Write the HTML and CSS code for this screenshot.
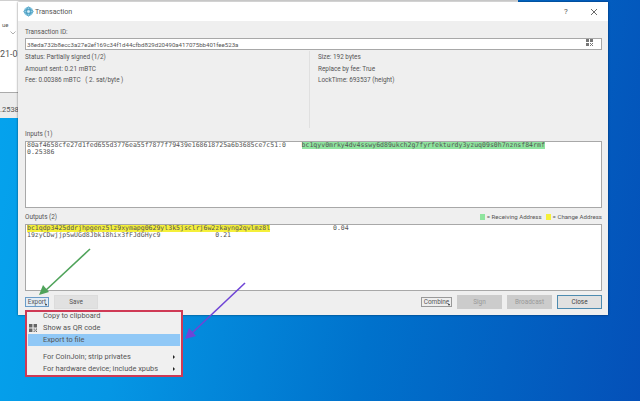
FILE: index.html
```html
<!DOCTYPE html>
<html>

<head>
    <title>Transaction</title>
    <link rel="stylesheet" href="styles.css">
</head>

<body>
    <!-- window left behind the dialog -->
    <div class="back-window">
        <div class="back-top">
            <span class="back-tab">ue</span>
            <svg class="back-chevron" viewBox="0 0 6 4">
                <path d="M0.5 0.5L3 3L5.5 0.5" fill="none" stroke="#777" stroke-width="0.6"></path>
            </svg>
            <span class="back-date">21-07</span>
        </div>
        <div class="back-bottom">.25386</div>
    </div>

    <div class="dialog">
        <div class="titlebar">
            <svg class="app-icon" viewBox="0 0 12 12">
                <circle cx="6" cy="6" r="5.2" fill="#8fcbe4"></circle>
                <ellipse cx="6" cy="6" rx="5" ry="2" fill="none" stroke="#2a86ad" stroke-width="0.7"></ellipse>
                <ellipse cx="6" cy="6" rx="2" ry="5" fill="none" stroke="#2a86ad" stroke-width="0.7"></ellipse>
                <circle cx="6" cy="6" r="1.4" fill="#d8eef7"></circle>
            </svg>
            <span class="title">Transaction</span>
            <span class="help">?</span>
            <svg class="close-x" viewBox="0 0 8 8">
                <path d="M1 1L7 7M7 1L1 7" stroke="#444" stroke-width="0.8"></path>
            </svg>
        </div>

        <div class="body">
            <div class="label">Transaction ID:</div>
            <div class="txid">
                <span>38eda732b8ecc3a27e2ef169c34f1d44cfbd829d20490a417075bb401fee523a</span>
                <svg class="qr qr-field" viewBox="0 0 7 7">
                    <path d="M0 0h3v3h-3zM4 0h3v3h-3zM0 4h3v3h-3zM4 4h1v1h-1zM6 4h1v1h-1zM5 5h1v1h-1zM4 6h1v1h-1zM6 6h1v1h-1z" fill="#777"></path>
                </svg>
            </div>

            <div class="info">
                <div class="info-col">
                    <div>Status: Partially signed (1/2)</div>
                    <div>Amount sent: 0.21 mBTC</div>
                    <div>Fee: 0.00386 mBTC &nbsp;&nbsp;( 2. sat/byte )</div>
                </div>
                <div class="info-col info-right">
                    <div>Size: 192 bytes</div>
                    <div>Replace by fee: True</div>
                    <div>LockTime: 693537 (height)</div>
                </div>
            </div>

            <div class="label">Inputs (1)</div>
            <div class="textbox"><span>80af4658cfe27d1fed655d3776ea55f7877f79439e168618725a6b3685ce7c51:0    <span class="green">bc1qyv0mrky4dv4sswy6d89ukch2g7fyrfekturdy3yzuq09s0h7nznsf84rmf</span>
0.25386</span></div>

            <div class="label legend-row">
                <span>Outputs (2)</span>
                <span class="legend">
                    <i class="swatch swatch-green"></i> = Receiving Address
                    <i class="swatch swatch-yellow"></i> = Change Address
                </span>
            </div>
            <div class="textbox"><span><span class="yellow">bc1qdp3425ddrjhpgenz5lz9xymapg0629yl3k5jsclrj6w2zkayng2qvlmz8l</span>                0.04
19zyCDwjjpSwUGd8Jbk18hix3fFJdGHyc9              0.21</span></div>

            <div class="buttons">
                <button class="btn btn-small btn-focus">Export<i class="caret"></i></button>
                <button class="btn btn-save">Save</button>
                <span class="spacer"></span>
                <button class="btn btn-small btn-combine">Combine<i class="caret"></i></button>
                <button class="btn btn-off">Sign</button>
                <button class="btn btn-off">Broadcast</button>
                <button class="btn btn-close">Close</button>
            </div>
        </div>
    </div>

    <div class="menu">
        <div class="menu-item">Copy to clipboard</div>
        <div class="menu-item">
            <svg class="qr qr-menu" viewBox="0 0 7 7">
                <path d="M0 0h3v3h-3zM4 0h3v3h-3zM0 4h3v3h-3zM4 4h1v1h-1zM6 4h1v1h-1zM5 5h1v1h-1zM4 6h1v1h-1zM6 6h1v1h-1z" fill="#666"></path>
            </svg>
            Show as QR code
        </div>
        <div class="menu-item menu-active">Export to file</div>
        <div class="menu-sep"></div>
        <div class="menu-item">For CoinJoin; strip privates<i class="arrow"></i></div>
        <div class="menu-item">For hardware device; include xpubs<i class="arrow"></i></div>
    </div>

    <!-- annotation arrows drawn over the screenshot -->
    <svg class="arrows" viewBox="0 0 640 401">
        <path d="M90 249L45 291" stroke="#4fa35a" stroke-width="1.6" fill="none"></path>
        <path d="M39 295L49 292L43 285Z" fill="#4fa35a"></path>
        <path d="M245 283L191 334" stroke="#6f45d6" stroke-width="1.6" fill="none"></path>
        <path d="M185 339L196 336L189 328Z" fill="#6f45d6"></path>
    </svg>
</body>

</html>
```

FILE: styles.css
```css
html,
body {
    margin: 0;
    height: 100%;
}

body {
    position: relative;
    overflow: hidden;
    font-family: Roboto, Arial, sans-serif;
    font-size: 6.4px;
    color: #555;
    background: linear-gradient(100deg, #05a4ee 0%, #0596e4 25%, #0072cc 60%, #0450b8 100%);
}

.back-window {
    position: absolute;
    left: 0;
    top: 0;
    width: 518px;
    height: 118px;
    background-color: #fff;
    border-top: 1px solid #d0d0d0;
    box-sizing: border-box;
}

.back-top {
    height: 92px;
    border-bottom: 1px solid #aaa;
    box-sizing: border-box;
    color: #555;
}

.back-tab {
    display: block;
    padding: 20px 0 0 2px;
    font-size: 6px;
}

.back-chevron {
    display: block;
    width: 6px;
    height: 4px;
    margin: 3px 0 0 10px;
}

.back-date {
    display: block;
    padding-top: 14px;
    font-size: 9px;
}

.back-bottom {
    height: 25px;
    line-height: 34px;
    background-color: #ececec;
    font-size: 7.5px;
}

.dialog {
    position: absolute;
    left: 18px;
    top: 2px;
    width: 590px;
    height: 313px;
    background-color: #efefef;
    box-shadow: 0 0 2px rgba(0, 0, 0, 0.55);
}

.titlebar {
    display: flex;
    align-items: center;
    height: 19px;
    padding-left: 5px;
    background-color: #fff;
}

.app-icon {
    width: 11px;
    height: 11px;
}

.title {
    flex: 1;
    margin-left: 1px;
    font-size: 7.1px;
}

.help {
    width: 26px;
    font-size: 8px;
}

.close-x {
    width: 8px;
    height: 8px;
    margin-right: 10px;
}

.body {
    padding: 5px 6px 0 7px;
}

.label {
    height: 12px;
    line-height: 12px;
}

.txid {
    display: flex;
    justify-content: space-between;
    align-items: flex-start;
    height: 12px;
    line-height: 11px;
    padding: 0 8px 0 1px;
    background-color: #fff;
    border: 1px solid #a8a8a8;
    box-sizing: border-box;
    font-size: 6.1px;
}

.qr {
    display: block;
}

.qr-field {
    width: 7px;
    height: 7px;
}

.info {
    display: flex;
    height: 77px;
    margin-top: 1px;
    line-height: 11.5px;
}

.info-col {
    width: 288px;
    padding-top: 1px;
}

.info-right {
    padding-left: 8px;
    border-left: 1px solid #e0e0e0;
}

.textbox {
    height: 67px;
    padding: 0 1px;
    margin-top: 1px;
    background-color: #fff;
    border: 1px solid #a8a8a8;
    box-sizing: border-box;
    font-family: "DejaVu Sans Mono", monospace;
    font-size: 6.53px;
    line-height: 7px;
    white-space: pre;
}

.legend-row {
    display: flex;
    justify-content: space-between;
    margin-top: 3px;
}

.legend {
    display: flex;
    align-items: center;
    gap: 2px;
    font-size: 6.1px;
}

.swatch {
    width: 5px;
    height: 6px;
}

.swatch-green {
    background-color: #8fe59f;
}

.swatch-yellow {
    background-color: #f5f03a;
    margin-left: 2px;
}

.green,
.yellow {
    display: inline-block;
    height: 7px;
    line-height: 7px;
    vertical-align: top;
}

.green {
    background-color: #8fe59f;
}

.yellow {
    background-color: #f5f03a;
}

.buttons {
    display: flex;
    align-items: center;
    gap: 5px;
    height: 14px;
    margin-top: 4px;
}

.spacer {
    flex: 1;
}

.btn {
    position: relative;
    height: 14px;
    width: 45px;
    padding: 0;
    border: 1px solid #dcdcdc;
    background-color: #e1e1e1;
    box-sizing: border-box;
    font-family: inherit;
    font-size: 6.4px;
    color: #555;
}

.btn-small {
    height: 10px;
    width: 24px;
    line-height: 8px;
}

.btn-focus {
    border-color: #6a9cc8;
    background-color: #e2ecf5;
}

.btn-save {
    width: 44px;
}

.btn-combine {
    width: 31px;
    border-color: #999;
    background-color: #eee;
}

.btn-off {
    background-color: #ccc;
    border-color: #ccc;
    color: #999;
}

.btn-close {
    border: 1px solid #4d8bb0;
    color: #444;
}

.caret {
    position: absolute;
    right: 1px;
    bottom: 0;
    border-left: 1.5px solid transparent;
    border-right: 1.5px solid transparent;
    border-top: 2px solid #222;
}

.menu {
    position: absolute;
    left: 25px;
    top: 310px;
    width: 158px;
    height: 67px;
    background-color: #f0f0f0;
    border: 2px solid #cf3a55;
    box-sizing: border-box;
    font-size: 7.4px;
    color: #555;
}

.menu-item {
    position: relative;
    height: 12px;
    line-height: 12px;
    padding-left: 15px;
    margin: 0 1px;
}

.menu-item:first-child {
    height: 10px;
    line-height: 7px;
}

.menu-active {
    background-color: #90c8f6;
}

.menu-sep {
    height: 5px;
}

.qr-menu {
    position: absolute;
    left: 1px;
    top: 2px;
    width: 8px;
    height: 8px;
}

.arrow {
    position: absolute;
    right: 5px;
    top: 4px;
    border-top: 2px solid transparent;
    border-bottom: 2px solid transparent;
    border-left: 2.5px solid #222;
}

.arrows {
    position: absolute;
    left: 0;
    top: 0;
    width: 640px;
    height: 401px;
}
```
